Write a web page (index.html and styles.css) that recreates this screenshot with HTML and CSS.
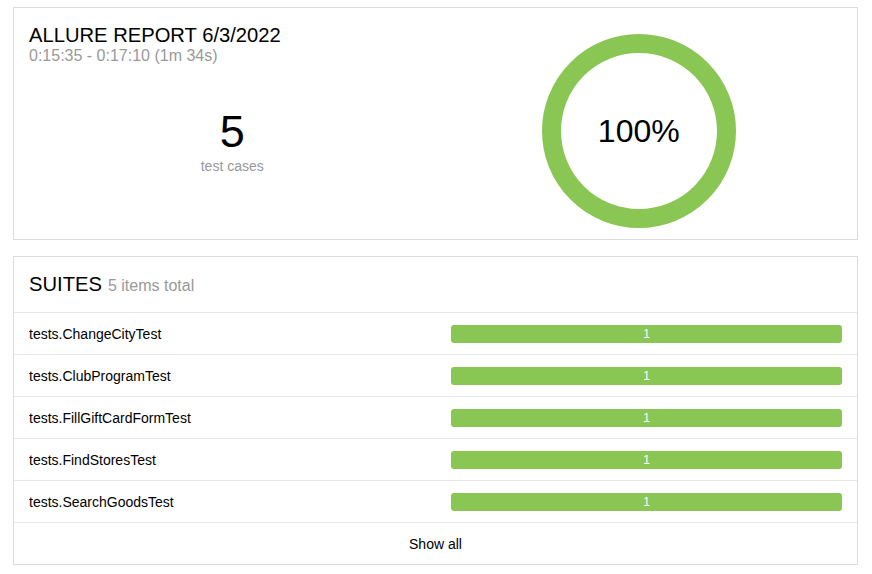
FILE: index.html
```html
<!DOCTYPE html>
<html>
<head>
<meta charset="utf-8">
<link rel="stylesheet" href="styles.css">
</head>
<body>
<div class="page">
  <section class="card summary">
    <div class="summary-left">
      <h1 class="title">ALLURE REPORT 6/3/2022</h1>
      <div class="subtitle">0:15:35 - 0:17:10 (1m 34s)</div>
      <div class="count">5</div>
      <div class="count-label">test cases</div>
    </div>
    <div class="summary-right">
      <div class="donut">
        <svg width="194" height="194" viewBox="0 0 194 194">
          <circle cx="97" cy="97" r="87.5" fill="none" stroke="#89c654" stroke-width="19"/>
        </svg>
        <div class="donut-text">100%</div>
      </div>
    </div>
  </section>

  <section class="card suites">
    <div class="suites-header">
      <span class="suites-title">SUITES</span>
      <span class="suites-count">5 items total</span>
    </div>
    <div class="row"><div class="name">tests.ChangeCityTest</div><div class="bar-wrap"><div class="bar">1</div></div></div>
    <div class="row"><div class="name">tests.ClubProgramTest</div><div class="bar-wrap"><div class="bar">1</div></div></div>
    <div class="row"><div class="name">tests.FillGiftCardFormTest</div><div class="bar-wrap"><div class="bar">1</div></div></div>
    <div class="row"><div class="name">tests.FindStoresTest</div><div class="bar-wrap"><div class="bar">1</div></div></div>
    <div class="row"><div class="name">tests.SearchGoodsTest</div><div class="bar-wrap"><div class="bar">1</div></div></div>
    <div class="row show-all">Show all</div>
  </section>
</div>
</body>
</html>
```

FILE: styles.css
```css
* { box-sizing: border-box; }
html, body {
  margin: 0;
  padding: 0;
  background: #fff;
  font-family: "Liberation Sans", Arial, sans-serif;
  color: #000;
}
.page {
  padding: 7px 14px 0 13px;
  width: 872px;
}
.card {
  border: 1px solid #dcdcdc;
  background: #fff;
}
.summary {
  display: grid;
  grid-template-columns: 1fr 1fr;
  padding: 15px 15px 10px 15px;
  height: 233px;
}
.summary-left {
  display: flex;
  flex-direction: column;
}
.title {
  margin: 0;
  font-size: 20.2px;
  font-weight: normal;
  line-height: 24px;
}
.subtitle {
  font-size: 16px;
  line-height: 18px;
  color: #999;
}
.count {
  margin-top: 44px;
  font-size: 45px;
  line-height: 45px;
  text-align: center;
}
.count-label {
  margin-top: 4px;
  font-size: 14px;
  line-height: 16px;
  color: #999;
  text-align: center;
}
.summary-right {
  display: flex;
  justify-content: center;
}
.donut {
  position: relative;
  width: 194px;
  height: 194px;
  margin-top: 11px;
}
.donut svg { display: block; }
.donut-text {
  position: absolute;
  inset: 0;
  display: flex;
  align-items: center;
  justify-content: center;
  font-size: 32px;
}
.suites {
  margin-top: 16px;
}
.suites-header {
  height: 55px;
  padding: 0 15px;
  line-height: 24px;
  display: flex;
  align-items: baseline;
  padding-top: 15px;
  gap: 6px;
}
.suites-title { font-size: 20.2px; }
.suites-count { font-size: 16px; color: #999; }
.row {
  border-top: 1px solid #e6e6e6;
  height: 42px;
  padding: 0 15px;
  display: flex;
  align-items: center;
  font-size: 14px;
  line-height: 16px;
}
.name {
  width: 422px;
  flex: none;
}
.bar-wrap {
  flex: 1;
}
.bar {
  height: 18px;
  background: #89c654;
  border-radius: 3px;
  color: #fff;
  font-size: 12px;
  line-height: 18px;
  text-align: center;
}
.show-all {
  justify-content: center;
}
```
